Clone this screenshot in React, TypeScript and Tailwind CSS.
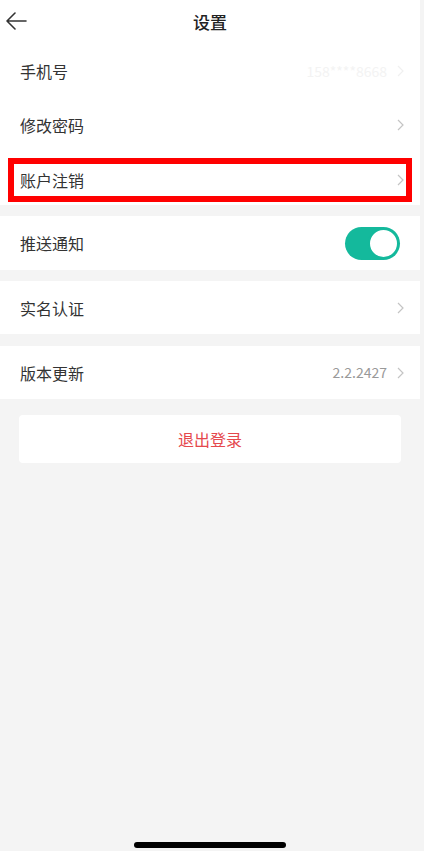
import React from "react";

const font = { fontFamily: '"Noto Sans CJK SC", "Noto Sans", sans-serif' };

function Chevron({ color = "#c4c4c4" }: { color?: string }) {
  return (
    <svg width="7" height="12" viewBox="0 0 7 12" className="shrink-0">
      <path d="M1 1 L6 6 L1 11" fill="none" stroke={color} strokeWidth="1.2" />
    </svg>
  );
}

function Row({
  label,
  value,
  valueClass = "text-[#999]",
  chevron,
  height = "h-[54px]",
}: {
  label: string;
  value?: string;
  valueClass?: string;
  chevron?: string;
  height?: string;
}) {
  return (
    <div className={`${height} flex items-center pl-[20px] pr-[16px]`}>
      <span className="flex-1 text-[16px] text-[#333]">{label}</span>
      {value && <span className={`text-[14px] mr-[10px] ${valueClass}`}>{value}</span>}
      <Chevron color={chevron} />
    </div>
  );
}

export default function App() {
  return (
    <div className="min-h-[851px] bg-[#f4f4f4] relative" style={font}>
      <div className="w-[420px]">
        {/* header + account group */}
        <div className="bg-white">
          <div className="h-[44px] relative flex items-center justify-center">
            <svg
              width="22"
              height="18"
              viewBox="0 0 22 18"
              className="absolute left-[5px] top-[12px]"
            >
              <path
                d="M21 9 H2 M10 1 L2 9 L10 17"
                fill="none"
                stroke="#333"
                strokeWidth="1.6"
                strokeLinecap="round"
                strokeLinejoin="round"
              />
            </svg>
            <span className="text-[17px] text-[#222] font-medium">设置</span>
          </div>
          <Row label="手机号" value="158****8668" valueClass="text-[#f3f3f3]" chevron="#f0f0f0" />
          <Row label="修改密码" />
          <div className="h-[53px] pt-[6px]">
            <div className="mx-[8px] h-[44px] flex items-center border-[6px] border-[#ff0000] pl-[6px] pr-[2px]">
              <span className="flex-1 text-[16px] text-[#333]">账户注销</span>
              <Chevron />
            </div>
          </div>
        </div>

        <div className="bg-white mt-[11px] h-[54px] flex items-center pl-[20px] pr-[20px]">
          <span className="flex-1 text-[16px] text-[#333]">推送通知</span>
          <div className="w-[55px] h-[33px] rounded-full bg-[#14b99c] flex items-center justify-end pr-[1px]">
            <div className="w-[31px] h-[31px] rounded-full bg-white border-[2px] border-[#14b99c]" />
          </div>
        </div>

        <div className="bg-white mt-[11px]">
          <Row label="实名认证" height="h-[53px]" />
        </div>

        <div className="bg-white mt-[12px]">
          <Row label="版本更新" value="2.2.2427" height="h-[53px]" />
        </div>

        <div className="mx-[19px] mt-[16px] h-[48px] bg-white rounded-[4px] flex items-center justify-center">
          <span className="text-[16px] text-[#e5484d]">退出登录</span>
        </div>
      </div>

      <div className="absolute left-[134px] top-[842px] w-[152px] h-[6px] rounded-full bg-black" />
    </div>
  );
}
